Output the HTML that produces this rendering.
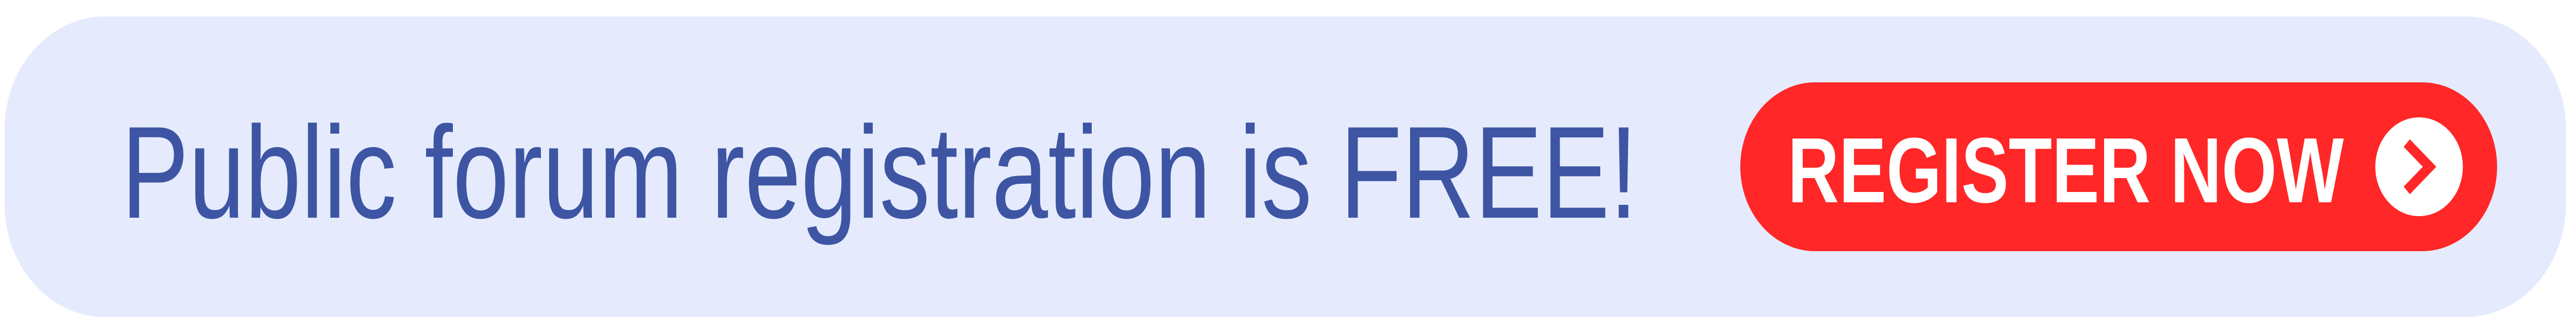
<!DOCTYPE html>
<html><head><meta charset="utf-8"><style>
html,body{margin:0;padding:0;width:100%;height:100%;background:#fff;overflow:hidden}
svg{display:block;position:fixed;left:0;top:0;width:100vw;height:100vh}
</style></head><body>
<svg viewBox="0 0 5647 647" preserveAspectRatio="none" xmlns="http://www.w3.org/2000/svg">
<rect x="10" y="32" width="5615" height="584" rx="220" ry="220" fill="#e5ebfd"/>
<text x="266" y="423" font-family="Liberation Sans, sans-serif" font-size="255" fill="#3d55a3" textLength="3324" lengthAdjust="spacingAndGlyphs">Public forum registration is FREE!</text>
<rect x="3815" y="160" width="1659" height="328" rx="164" ry="164" fill="#ff2727"/>
<text x="3919" y="393" font-family="Liberation Sans, sans-serif" font-weight="bold" font-size="180" fill="#fff" textLength="1219" lengthAdjust="spacingAndGlyphs">REGISTER NOW</text>
<circle cx="5303" cy="324" r="96" fill="#fff"/>
<polyline points="5276,278 5326,324 5276,370" fill="none" stroke="#ff2727" stroke-width="20"/>
</svg>
</body></html>
